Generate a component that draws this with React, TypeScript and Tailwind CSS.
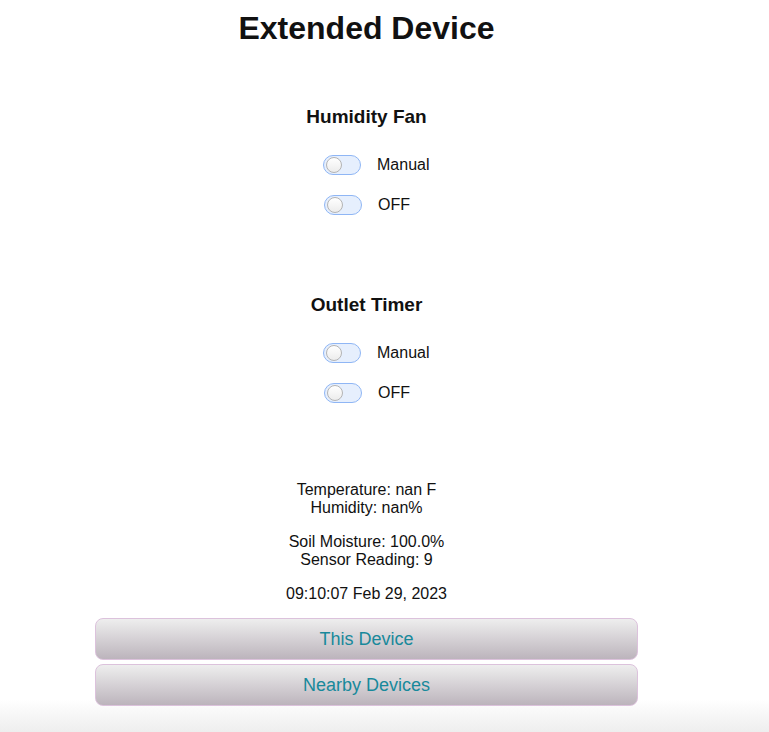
import React from 'react';

type Row = { label: string };

const Toggle: React.FC = () => (
    <span className="relative shrink-0 inline-block w-[38px] h-[20px] rounded-full border border-[#8fb6f5] bg-[#e6effd]">
        <span className="absolute left-[2px] top-[1px] w-[16px] h-[16px] rounded-full border border-[#b4b4b4] bg-[linear-gradient(#ffffff,#ececec)]" />
    </span>
);

const Section: React.FC<{ title: string; rows: Row[]; top: string }> = ({ title, rows, top }) => (
    <div className={top}>
        <h3 className="text-[19px] leading-[22px] font-bold text-center">{title}</h3>
        <div className="w-[87px] mx-auto mt-[17px]">
            {rows.map((r, i) => (
                <div key={r.label} className={`flex items-center h-[40px] whitespace-nowrap ${i === 1 ? 'pl-[1px]' : ''}`}>
                    <Toggle />
                    <span className="ml-4 text-[16px]">{r.label}</span>
                </div>
            ))}
        </div>
    </div>
);

const rows: Row[] = [{ label: 'Manual' }, { label: 'OFF' }];

export default function App() {
    return (
        <div
            className="min-h-[732px] bg-[linear-gradient(to_bottom,#ffffff_95.5%,#eeeeee)] text-[#111]"
            style={{ fontFamily: '"Liberation Sans", Arial, sans-serif' }}
        >
            <div className="w-[733px] pt-[10px] pb-[26px]">
                <h1 className="text-[32px] leading-[36px] font-bold text-center">Extended Device</h1>

                <Section title="Humidity Fan" rows={rows} top="mt-[60px]" />
                <Section title="Outlet Timer" rows={rows} top="mt-[69px]" />

                <div className="mt-[68px] text-center text-[16px] leading-[18px]">
                    <p>Temperature: nan F<br />Humidity: nan%</p>
                    <p className="mt-4">Soil Moisture: 100.0%<br />Sensor Reading: 9</p>
                    <p className="mt-4">09:10:07 Feb 29, 2023</p>
                </div>

                <div className="mt-[15px] flex flex-col items-center gap-[4px]">
                    {['This Device', 'Nearby Devices'].map((b) => (
                        <button
                            key={b}
                            className="w-[543px] h-[42px] rounded-[8px] border border-[#dcc2dc] bg-[linear-gradient(#eeeeee,#bcb4bc)] text-[18px] text-[#18899b]"
                        >
                            {b}
                        </button>
                    ))}
                </div>
            </div>
        </div>
    );
}
